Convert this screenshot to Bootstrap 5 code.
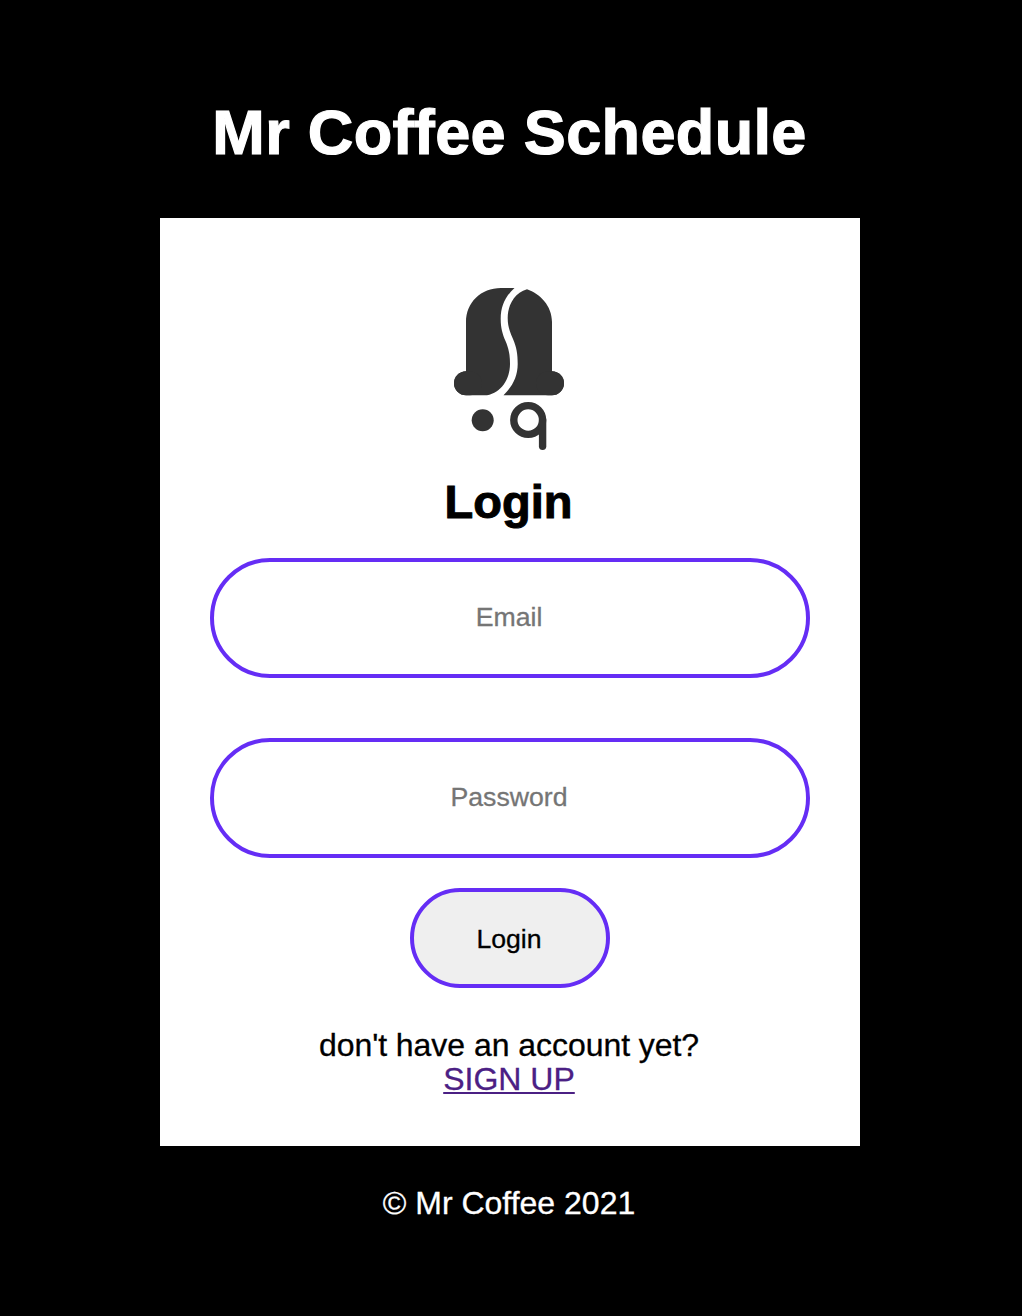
<!DOCTYPE html>
<html lang="en">
<head>
<meta charset="utf-8">
<meta name="viewport" content="width=device-width, initial-scale=1">
<title>Mr Coffee Schedule</title>
<link href="https://cdn.jsdelivr.net/npm/bootstrap@5.3.0/dist/css/bootstrap.min.css" rel="stylesheet">
<style>
body{font-family:"Liberation Sans",Arial,sans-serif;font-size:32px;line-height:34px;color:#000;background:#000;-webkit-text-stroke:.3px}
.page{width:1020px;height:1316px;padding-top:97px}
.page-title{font-size:63px;line-height:70px;letter-spacing:.35px;margin:0 0 51px;padding-right:1px;-webkit-text-stroke:1.2px}
.login-box{width:700px;height:928px;padding:70px 50px 0}
.logo{width:110px;height:162px;margin-right:2px}
.form-title{font-size:47px;line-height:52px;margin:26px 0 30px;padding-right:3px;-webkit-text-stroke:1px}
.pill{border:4px solid #652df5;font-size:26.67px;color:#000;padding:0 2px 2px 0}
.pill-input{height:120px;border-radius:60px;background:#fff}
.pill-input::placeholder{color:#757575;opacity:1}
.pill-input:focus{border-color:#652df5;box-shadow:none}
.pill-btn,.pill-btn:hover{width:200px;height:100px;margin-top:30px;padding:2px 2px 0 0;border:4px solid #652df5;border-radius:50px;background:#efefef;color:#000}
.field-gap{gap:60px}
.signup{margin-top:40px;padding-right:2px}
.signup a{color:#4b2084;text-decoration-thickness:2px;text-underline-offset:2px}
.ask{letter-spacing:-.05px}
.page-footer{margin-top:40px;padding-right:2px}
</style>
</head>
<body>
<div class="page d-flex flex-column align-items-center text-center">
  <h1 class="page-title fw-bold text-white text-nowrap">Mr Coffee Schedule</h1>
  <main class="login-box bg-white d-flex flex-column align-items-center">
    <svg class="logo flex-shrink-0" viewBox="0 0 110 162" fill="#333" aria-hidden="true">
      <path d="M60.500 0H47C27 0 12 14.500 12 34V83.200A11.900 11.900 0 0 0 12 107.200H33C47 105 56 91 56 76C56 66 54.500 60 51.500 53C48.500 46 46.700 40 46.700 31C46.700 18 51.500 8 60.500 0Z"/>
      <path d="M73 1.300C86 5.500 98 18 98 34V83.200A11.900 11.900 0 0 1 98 107.200H49.500C58 99 63.700 89 63.700 76C63.700 66 62.500 59 59 51C55.500 43 53.700 38 53.700 30C53.700 17 60.500 5 73 1.300Z"/>
      <rect x="0" y="83.200" width="28" height="24" rx="12"/>
      <rect x="82" y="83.200" width="28" height="24" rx="12"/>
      <circle cx="28.700" cy="132.200" r="11"/>
      <g fill="none" stroke="#333" stroke-width="7.400" stroke-linecap="round">
        <circle cx="74.200" cy="132" r="14.400"/>
        <path d="M88.600 132V158.300"/>
      </g>
    </svg>
    <h2 class="form-title fw-bold">Login</h2>
    <form class="w-100 d-flex flex-column align-items-center">
      <div class="w-100 d-flex flex-column field-gap">
        <input type="email" class="form-control pill pill-input text-center" placeholder="Email" aria-label="Email">
        <input type="password" class="form-control pill pill-input text-center" placeholder="Password" aria-label="Password">
      </div>
      <button type="button" class="btn pill pill-btn">Login</button>
    </form>
    <div class="signup"><span class="ask">don't have an account yet?</span><br><a href="#">SIGN UP</a></div>
  </main>
  <footer class="page-footer text-white">© Mr Coffee 2021</footer>
</div>
<script src="https://cdn.jsdelivr.net/npm/bootstrap@5.3.0/dist/js/bootstrap.bundle.min.js"></script>
</body>
</html>
